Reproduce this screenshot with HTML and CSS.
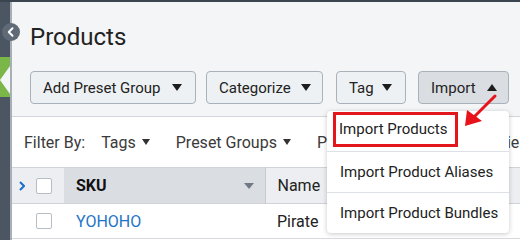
FILE: index.html
```html
<!DOCTYPE html>
<html lang="en">
<head>
    <meta charset="UTF-8">
    <title>Products</title>
    <link rel="stylesheet" href="styles.css">
</head>
<body>
    <div class="app">
        <aside class="rail">
            <svg class="rail-tab" width="10" height="40" viewBox="0 0 10 40">
                <rect width="10" height="40" fill="#7ab648"/>
                <polygon points="10,9 0,23 10,37" fill="#f4f5f7"/>
            </svg>
        </aside>

        <!-- collapse toggle sits over the rail edge -->
        <button class="collapse" type="button">
            <svg width="18" height="18" viewBox="0 0 18 18">
                <circle cx="9" cy="9" r="9" fill="#5f6a76"/>
                <polyline points="10.5,5.3 6.8,9 10.5,12.7" fill="none" stroke="#fff" stroke-width="2" stroke-linecap="round" stroke-linejoin="round"/>
            </svg>
        </button>

        <main class="page">
            <div class="head">
                <h1 class="title">Products</h1>
                <div class="toolbar">
                    <button class="tb-btn btn-preset" type="button">Add Preset Group <span class="caret"></span></button>
                    <button class="tb-btn btn-cat" type="button">Categorize <span class="caret"></span></button>
                    <button class="tb-btn btn-tag" type="button">Tag <span class="caret"></span></button>
                    <div class="import-wrap">
                        <button class="tb-btn btn-import is-open" type="button">Import <span class="caret up"></span></button>
                        <ul class="menu">
                            <li><span class="mark">Import Products</span></li>
                            <li>Import Product Aliases</li>
                            <li>Import Product Bundles</li>
                        </ul>
                        <svg class="pointer" width="40" height="40" viewBox="0 0 40 40">
                            <line x1="35" y1="6" x2="11" y2="30" stroke="#e8121a" stroke-width="3" stroke-linecap="round"/>
                            <polygon points="5,36 7,20 22,31" fill="#e8121a"/>
                        </svg>
                    </div>
                </div>
            </div>

            <section class="panel">
                <div class="filters">
                    <span class="filter-label">Filter By:</span>
                    <span class="filter">Tags <span class="caret"></span></span>
                    <span class="filter">Preset Groups <span class="caret"></span></span>
                    <span class="filter">Product Type <span class="caret"></span></span>
                    <span class="filter">Categories <span class="caret"></span></span>
                </div>

                <table class="grid">
                    <colgroup>
                        <col class="col-check">
                        <col class="col-sku">
                        <col>
                    </colgroup>
                    <thead>
                        <tr>
                            <th class="check">
                                <div class="check-cell">
                                    <svg class="expand" width="6" height="10" viewBox="0 0 6 10">
                                        <polyline points="1,1 5,5 1,9" fill="none" stroke="#1a6fc9" stroke-width="2"/>
                                    </svg>
                                    <span class="box"></span>
                                </div>
                            </th>
                            <th class="sku"><div class="sku-cell">SKU <span class="sort"></span></div></th>
                            <th class="name">Name</th>
                        </tr>
                    </thead>
                    <tbody>
                        <tr>
                            <td class="check"><div class="check-cell"><span class="box"></span></div></td>
                            <td class="sku"><a href="#">YOHOHO</a></td>
                            <td class="name">Pirate</td>
                        </tr>
                    </tbody>
                </table>
            </section>
        </main>
    </div>
</body>
</html>
```

FILE: styles.css
```css
*{
    margin:0;
    padding:0;
    box-sizing:border-box;
}
body{
    font-family:Roboto, "Liberation Sans", sans-serif;
    color:#222;
    background:#f4f5f7;
}
.app{
    position:relative;
    display:flex;
    height:240px;
    overflow:hidden;
    border-top:2px solid #3b4550;
}

/* left rail */
.rail{
    flex:0 0 12px;
    padding-top:55px;
    background:#4b5662;
    border-right:2px solid #a7afb8;
}
.rail-tab{
    display:block;
}
.collapse{
    position:absolute;
    left:2px;
    top:21px;
    width:18px;
    height:18px;
    border:0;
    background:none;
    z-index:5;
}
.collapse svg{
    display:block;
}

/* page */
.page{
    flex:1;
    display:flex;
    flex-direction:column;
    min-width:0;
}
.head{
    padding:21px 0 0 18px;
}
.title{
    font-size:24px;
    line-height:28px;
    font-weight:400;
    color:#222;
}
.toolbar{
    display:flex;
    margin-top:20px;
}
.tb-btn{
    display:inline-flex;
    align-items:center;
    justify-content:space-between;
    height:33px;
    padding:0 11px 0 12px;
    font-family:inherit;
    font-size:15px;
    color:#222;
    background:#eef1f4;
    border:1px solid #a9b1ba;
    border-radius:4px;
}
.btn-preset{
    width:166px;
    padding-right:13px;
}
.btn-cat{
    width:117px;
    margin-left:10px;
}
.btn-tag{
    width:70px;
    margin-left:13px;
    padding-right:13px;
}
.import-wrap{
    position:relative;
    margin-left:12px;
}
.btn-import{
    width:91px;
}
.tb-btn.is-open{
    background:#dadee3;
}
.caret{
    display:inline-block;
    width:0;
    height:0;
    border-left:5px solid transparent;
    border-right:5px solid transparent;
    border-top:7px solid #1d1d1d;
}
.caret.up{
    border-top:0;
    border-bottom:7px solid #1d1d1d;
}

/* import dropdown */
.menu{
    position:absolute;
    right:0;
    top:calc(100% + 7px);
    width:182px;
    list-style:none;
    background:#fff;
    border-radius:4px;
    box-shadow:0 1px 5px rgba(0,0,0,.22);
    z-index:10;
}
.menu li{
    height:41px;
    line-height:40px;
    padding-left:13px;
    font-size:15px;
    color:#222;
    border-bottom:1px solid #dde0e4;
    white-space:nowrap;
}
.menu li:last-child{
    border-bottom:0;
    height:40px;
}
.menu .mark{
    display:inline-block;
    margin-top:1px;
    margin-left:-7px;
    padding:0 8px 0 3px;
    line-height:29px;
    border:3px solid #e3161b;
    vertical-align:top;
}
.pointer{
    position:absolute;
    left:42px;
    top:19px;
    z-index:11;
}

/* panel */
.panel{
    flex:1;
    margin-top:12px;
    background:#fff;
    border-top:1px solid #d3d7dc;
}
.filters{
    display:flex;
    align-items:center;
    height:50px;
    padding-left:12px;
    font-size:16px;
    color:#3a3a3a;
    white-space:nowrap;
}
.filter-label{
    margin-right:16px;
}
.filter{
    display:inline-flex;
    align-items:center;
    gap:6px;
    margin-right:26px;
}
.filter .caret{
    border-left-width:4.5px;
    border-right-width:4.5px;
    border-top:6px solid #333;
}

/* grid */
.grid{
    width:100%;
    border-collapse:collapse;
    table-layout:fixed;
    font-size:16px;
}
.col-check{
    width:52px;
}
.col-sku{
    width:201px;
}
.grid th,
.grid td{
    height:36px;
    text-align:left;
    border-top:1px solid #d0d4d9;
    white-space:nowrap;
}
.grid td{
    height:35px;
    border-bottom:1px solid #d6dade;
}
.grid th.check,
.grid th.name{
    background:#eceef1;
}
.grid th.sku{
    background:#dadee3;
    border-right:1px solid #c5cad0;
    font-weight:700;
    color:#111;
}
.grid th.name{
    font-weight:400;
}
.grid .sku,
.grid .name{
    padding-left:12px;
}
.check-cell{
    position:relative;
    display:flex;
    align-items:center;
    padding-left:24px;
}
.expand{
    position:absolute;
    left:7px;
    top:50%;
    margin-top:-5px;
}
.box{
    width:16px;
    height:16px;
    background:#fff;
    border:1px solid #b6bdc5;
    border-radius:2px;
}
.sku-cell{
    display:flex;
    align-items:center;
    justify-content:space-between;
    padding-right:11px;
}
.sort{
    width:0;
    height:0;
    border-left:5px solid transparent;
    border-right:5px solid transparent;
    border-top:6px solid #717a84;
}
.grid a{
    color:#1e74c6;
    text-decoration:none;
}
```
